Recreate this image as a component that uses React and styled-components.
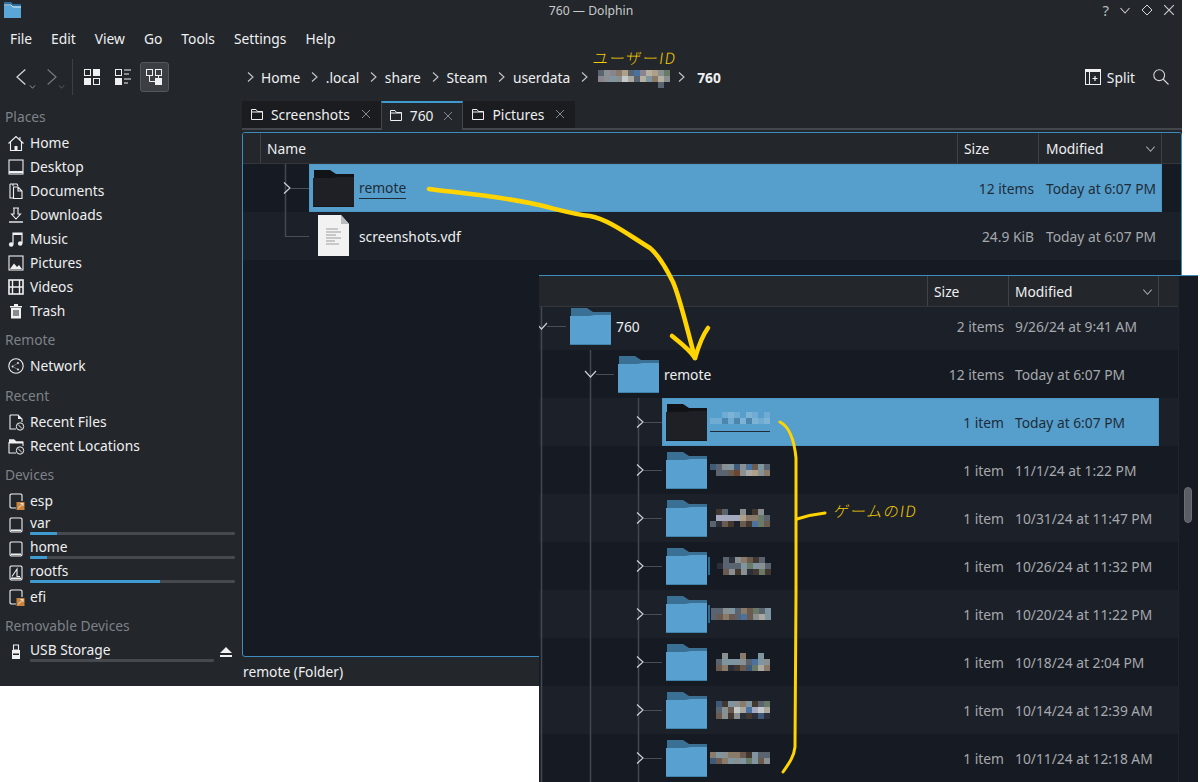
import styled, { createGlobalStyle } from "styled-components";

const GlobalStyle = createGlobalStyle`
  html, body {
    margin: 0;
    padding: 0;
    background: #fff;
  }
  body {
    font-family: "Noto Sans", "Open Sans", sans-serif;
    font-size: 13.8px;
    color: #eff0f1;
  }
`;

/* icons */
const Svg = styled.svg`
  display: block;
  flex: none;
  overflow: visible;
`;

function Chevron({ size = 12, dir = "right", color = "#c4c6c9", width = 1.1 }) {
  const d = {
    right: "M4 1.5 L9 6 L4 10.5",
    left: "M8 1.5 L3 6 L8 10.5",
    down: "M1.5 4 L6 9 L10.5 4",
  }[dir];
  return (
    <Svg width={size} height={size} viewBox="0 0 12 12" fill="none" stroke={color} strokeWidth={width}>
      <path d={d} />
    </Svg>
  );
}

function FolderIcon({ dark }) {
  const back = dark ? "#121317" : "#3a7094";
  const front = dark ? "#1f2025" : "#58a0cf";
  const edge = dark ? "#151619" : "#3f84ae";
  return (
    <Svg width="42" height="38" viewBox="0 -1 42 38">
      <path d="M1 0 H17 L23 4 H41 V12 H1 Z" fill={back} />
      <path d="M0 8 H19 L25 7 H41 V37 H0 Z" fill={front} />
      <rect x="0" y="36" width="41" height="1" fill={edge} />
    </Svg>
  );
}

function FileIcon() {
  return (
    <Svg width="32" height="42" viewBox="0 0 32 42">
      <path d="M0 0 H23 L31 9 V41 H0 Z" fill="#f2f2f2" />
      <path d="M23 0 L31 9 H23 Z" fill="#b9bbbd" />
      <path d="M8 14 H20 M8 17 H23 M8 20 H18 M8 23 H23 M8 26 H17 M8 29 H21" stroke="#9b9da0" strokeWidth="1" />
    </Svg>
  );
}

const stroke = { fill: "none", stroke: "currentColor", strokeWidth: 1.1 };

function Clock() {
  return (
    <g>
      <circle cx="12" cy="12.5" r="3.7" fill="#23262b" stroke="currentColor" />
      <path d="M10 10.5 L14 14.5" stroke="currentColor" />
    </g>
  );
}

function Badge() {
  return (
    <g>
      <rect x="8.5" y="9" width="8" height="8" fill="#c9853f" />
      <path d="M10 15.5 L15 10.5 M12.5 10.5 H15 V13" stroke="#f4e4d0" fill="none" />
    </g>
  );
}

const placeIcons = {
  home: (
    <g {...stroke}>
      <path d="M.5 8.5 L8 1.5 L15.5 8.5 M2.5 7 V15.5 H13.5 V7 M12 2 V4.5" />
      <rect x="6.5" y="11" width="3" height="4.5" fill="currentColor" stroke="none" />
    </g>
  ),
  desktop: (
    <g {...stroke}>
      <rect x="1" y="1" width="14" height="14" />
      <path d="M1 13 H15" strokeWidth="2" />
    </g>
  ),
  documents: (
    <g {...stroke}>
      <path d="M5 3 V1 H9 L10 3 M2 1 H5 M2 1 V15 H5" />
      <path d="M5.5 4 H10 L14 8 V15.5 H5.5 Z M10 4 V8 H14" />
    </g>
  ),
  downloads: (
    <g {...stroke}>
      <path d="M5 1 H11 M6 1 V7 H3.5 L8 12 L12.5 7 H10 V1" />
      <path d="M1 15 H15" strokeWidth="1.4" />
    </g>
  ),
  music: (
    <g>
      <path d="M5 13 V2 H14 V12" fill="none" stroke="currentColor" strokeWidth="1.2" />
      <path d="M5 2 H14 V4 H5 Z" fill="currentColor" />
      <circle cx="3.2" cy="13.5" r="2.3" fill="currentColor" />
      <circle cx="12.2" cy="12.5" r="2.3" fill="currentColor" />
    </g>
  ),
  pictures: (
    <g>
      <rect x="1" y="1" width="14" height="14" {...stroke} />
      <path d="M2 14 L6 8.5 L9 12 L11 10 L14 14 Z" fill="currentColor" />
    </g>
  ),
  videos: (
    <g>
      <rect x="1" y="1" width="14" height="14" fill="none" stroke="currentColor" strokeWidth="1.6" />
      <path d="M4.5 1 V15 M11.5 1 V15 M4.5 8 H11.5 M1 8 H4.5 M11.5 8 H15" stroke="currentColor" strokeWidth="1.4" />
    </g>
  ),
  trash: (
    <g>
      <path d="M2 3 H14 V4.5 H2 Z M6 1 H10 V3 H6 Z M3 5 H13 V15.5 H3 Z" fill="currentColor" />
      <path d="M6 7 V13 M8 7 V13 M10 7 V13" stroke="#23262b" strokeWidth="1" />
    </g>
  ),
  network: (
    <g {...stroke}>
      <circle cx="8" cy="8" r="7.2" />
      <circle cx="4.5" cy="8.5" r=".9" fill="currentColor" stroke="none" />
      <circle cx="10" cy="5" r=".9" fill="currentColor" stroke="none" />
      <circle cx="10" cy="11.5" r=".9" fill="currentColor" stroke="none" />
      <path d="M4.5 8.5 L10 5 M4.5 8.5 L10 11.5" strokeWidth=".4" />
    </g>
  ),
  recentFiles: (
    <g>
      <path d="M2 1 H10 L14 5 V8 M2 1 V15 H8" {...stroke} />
      <path d="M10 1 L14 5 H10 Z" fill="currentColor" />
      <Clock />
    </g>
  ),
  recentLocations: (
    <g>
      <path d="M1 2 H6 L8 4 H15 V8 M1 4 V15 H8" {...stroke} />
      <path d="M1 1.5 H6 L8 3.5 H15 V5.5 H1 Z" fill="currentColor" />
      <Clock />
    </g>
  ),
  drive: (
    <g {...stroke}>
      <path d="M3 1 H13 L14 2 V14 L13 15 H3 L2 14 V2 Z" />
      <path d="M3 13.3 H13" strokeWidth="1.6" />
    </g>
  ),
  driveLink: (
    <g>
      <path d="M3 1 H13 L14 2 V8 M3 1 L2 2 V14 L3 15 H8" {...stroke} />
      <Badge />
    </g>
  ),
  root: (
    <g {...stroke}>
      <path d="M3 1 H13 L14 2 V14 L13 15 H3 L2 14 V2 Z" />
      <path d="M4 11.5 L9 4 V11.5 H12" />
      <path d="M3 13.3 H13" strokeWidth="1.6" />
    </g>
  ),
  usb: (
    <g>
      <path d="M5.5 1 H10.5 V6 H5.5 Z" {...stroke} />
      <path d="M4 6 H12 V15 H4 Z" fill="currentColor" />
      <path d="M5 9.5 H11 V11 H5 Z" fill="#23262b" />
    </g>
  ),
};

function PlaceIcon({ name }) {
  return (
    <Svg width="16" height="16" viewBox="0 0 16 16">
      {placeIcons[name]}
    </Svg>
  );
}

function ViewIcon({ type }) {
  const box = { fill: "none", stroke: "#eff0f1", strokeWidth: 1 };
  const solid = { fill: "#eff0f1" };
  if (type === "icons")
    return (
      <Svg width="16" height="16" viewBox="0 0 16 16">
        <rect x=".5" y=".5" width="6" height="6" {...box} />
        <rect x="9" y="0" width="7" height="7" {...solid} />
        <rect x="0" y="9" width="7" height="7" {...solid} />
        <rect x="9.5" y="9.5" width="6" height="6" {...box} />
      </Svg>
    );
  if (type === "compact")
    return (
      <Svg width="16" height="16" viewBox="0 0 16 16">
        <rect x=".5" y=".5" width="6" height="6" {...box} />
        <rect x="0" y="9" width="7" height="7" {...solid} />
        <path d="M9 1 H16 M9 5 H14 M9 10 H16 M9 14 H13" stroke="#eff0f1" />
      </Svg>
    );
  return (
    <Svg width="16" height="16" viewBox="0 0 16 16">
      <rect x=".5" y=".5" width="6" height="6" {...box} />
      <rect x="9.5" y=".5" width="6" height="6" {...box} />
      <path d="M3.5 7 V12.5 H9 M12.5 7 V9" stroke="#eff0f1" fill="none" />
      <rect x="9" y="9" width="7" height="7" {...solid} />
    </Svg>
  );
}

function TabFolder() {
  return (
    <Svg width="12" height="11" viewBox="0 0 12 11" fill="none" stroke="#eff0f1">
      <path d="M.5 .5 H5 L6.5 2.5 H11.5 V10.5 H.5 Z" />
      <path d="M.5 3 H11.5" />
    </Svg>
  );
}

function CloseX({ size = 10, color = "#85888c" }) {
  return (
    <Svg width={size} height={size} viewBox="0 0 10 10" stroke={color} fill="none">
      <path d="M1 1 L9 9 M9 1 L1 9" />
    </Svg>
  );
}

/* pixelated bits of censored text */
const palette = {
  a: "#5a6470", b: "#8a8f92", c: "#6b5a50", d: "#3f5a78", e: "#aaa8a0",
  f: "#43382f", g: "#7f95a0", h: "#ae9f88", i: "#4a72a0", j: "#6a7a68",
  k: "#2a2f3a", l: "#c5c8c8", m: "#8a7a6a", n: "#a5a9c0", o: "#6b4630",
  p: "#6fabd2", q: "#4c86ae", r: "#7db4d6", s: "#8a8490", t: "#b5b0a0",
};

function Mosaic({ rows }) {
  return (
    <Svg width={rows[0].length * 6} height={rows.length * 6} shapeRendering="crispEdges">
      {rows.map((row, y) =>
        row.split("").map((c, x) =>
          palette[c] ? <rect key={x} x={x * 6} y={y * 6} width="6" height="6" fill={palette[c]} /> : null,
        ),
      )}
    </Svg>
  );
}

const mosaics = {
  crumb: ["absmhaisthbj", "sbgbleatgmtb", "..........a."],
  sel: ["..prp.rp.p", "ppqpqrqrpr", ".........."],
  m1: ["dabgdbicga", ".aacobehbm"],
  m2: [".fa..b.fb.", ".nnnnhmmja", "akcf.cfijc"],
  m3: ["..akbmcfa.", ".kaaagjgba", "..cbfbkfjf"],
  m5: ["aabgamcjag", "acmcaicbeg"],
  m4: ["..b..m..g.", ".agggbaigb", ".cmkfcdjem"],
  m6: [".dfgbmgfaj", ".abcleinle", ".cbfbkfkdk"],
  m7: ["mgbmmcfgaa", "dcmgbgjgcb"],
};

/* window */
const Page = styled.div`
  position: relative;
  width: 1200px;
  height: 782px;
  overflow: hidden;
  background: #fff;
`;

const Window = styled.div`
  width: 1182px;
  height: 686px;
  background: #23262b;
  display: flex;
  flex-direction: column;
`;

const TitleBar = styled.div`
  height: 22px;
  box-sizing: border-box;
  flex: none;
  display: flex;
  align-items: center;
  justify-content: space-between;
  padding: 0 7px 2px 4px;
  position: relative;
`;

const TitleText = styled.div`
  position: absolute;
  left: 0;
  right: 0;
  text-align: center;
  font-size: 12.2px;
  color: #c8cacc;
`;

const WindowButtons = styled.div`
  display: flex;
  align-items: center;
  gap: 10px;
  font-size: 15px;
  color: #b9bbbe;
`;

const MenuBar = styled.div`
  height: 32px;
  flex: none;
  display: flex;
  align-items: center;
  gap: 19px;
  padding: 0 0 0 10px;
`;

const Toolbar = styled.div`
  height: 46px;
  box-sizing: border-box;
  flex: none;
  display: flex;
  align-items: center;
  padding: 0 13px 0 0;
`;

const NavZone = styled.div`
  width: 244px;
  flex: none;
  display: flex;
  align-items: center;
  padding-left: 12px;
  box-sizing: border-box;
`;

const NavButton = styled.div`
  position: relative;
  width: 23px;
  height: 24px;
  margin-right: 6px;
  display: flex;
  align-items: center;
  opacity: ${(p) => (p.$dim ? 0.5 : 1)};
`;

const NavDrop = styled.span`
  position: absolute;
  left: 17px;
  bottom: -1px;
`;

const Separator = styled.div`
  width: 1px;
  height: 36px;
  background: #3c3f44;
  margin-left: 2px;
  margin-right: 4.5px;
`;

const ViewButton = styled.div`
  width: 29px;
  height: 30px;
  margin-right: 2px;
  display: flex;
  align-items: center;
  justify-content: center;
  box-sizing: border-box;
  border-radius: 3px;
  background: ${(p) => (p.$active ? "#3b3e43" : "transparent")};
  border: 1px solid ${(p) => (p.$active ? "#54575b" : "transparent")};
`;

const Crumbs = styled.div`
  display: flex;
  align-items: center;
  flex: 1;
`;

const CrumbArrow = styled.span`
  width: 12px;
  margin: 0 ${(p) => p.$right ?? 5.5}px 0 ${(p) => p.$left ?? 8}px;
  display: flex;
`;

const Crumb = styled.span`
  font-weight: ${(p) => (p.$current ? 700 : 400)};
`;

const CrumbMosaic = styled.span`
  margin-top: 4px;
`;

const SplitButton = styled.div`
  display: flex;
  align-items: center;
  gap: 6px;
  margin-right: 18px;
`;

const Body = styled.div`
  flex: 1;
  display: flex;
  min-height: 0;
`;

const Sidebar = styled.aside`
  width: 242px;
  flex: none;
  box-sizing: border-box;
`;

const Group = styled.section`
  margin-top: ${(p) => p.$gap ?? 5}px;
`;

const GroupTitle = styled.div`
  height: 24px;
  line-height: 24px;
  margin-bottom: 2px;
  padding-left: 5px;
  color: #7e8287;
`;

const Place = styled.div`
  height: 24px;
  display: flex;
  align-items: center;
  padding-left: 8px;
  padding-right: 7px;
  gap: 6px;
`;

const PlaceLabel = styled.div`
  flex: 1;
  line-height: 20px;
  min-width: 0;
`;

const Capacity = styled.div`
  height: 3px;
  background: #46494e;
  border-radius: 1px;
  margin: -1px 0 2px;
  overflow: hidden;
`;

const CapacityFill = styled.div`
  height: 100%;
  background: #3f9ad0;
`;

const EjectSlot = styled.span`
  margin-right: 3px;
`;

const Main = styled.main`
  flex: 1;
  min-width: 0;
  display: flex;
  flex-direction: column;
  padding-top: 1px;
`;

const TabBar = styled.div`
  height: 27px;
  flex: none;
  display: flex;
  border-bottom: 2px solid #43464a;
  margin-bottom: 2px;
`;

const Tab = styled.div`
  height: ${(p) => (p.$active ? 29 : 27)}px;
  box-sizing: border-box;
  display: flex;
  align-items: center;
  padding: 0 ${(p) => (p.$active ? 9 : 10)}px ${(p) => (p.$active ? 2 : 1)}px ${(p) => (p.$active ? 8 : 9)}px;
  background: ${(p) => (p.$active ? "#23262b" : "#1a1c20")};
  border-top: ${(p) => (p.$active ? "2px solid #3f9ad0" : "none")};
  border-left: ${(p) => (p.$active ? "1px solid #43464a" : "none")};
  border-right: ${(p) => (p.$active ? "1px solid #43464a" : "none")};
`;

const TabLabel = styled.span`
  margin: 0 ${(p) => (p.$active ? 10 : 11)}px 0 8px;
`;

const Panel = styled.div`
  flex: 1;
  min-height: 0;
  box-sizing: border-box;
  border: 1px solid #3f8dbd;
  border-radius: 3px;
  background: #161b23;
  overflow: hidden;
`;

const StatusBar = styled.div`
  height: 29px;
  flex: none;
  line-height: 30px;
  padding-left: 1px;
`;

const Header = styled.div`
  height: 31px;
  box-sizing: border-box;
  display: flex;
  position: relative;
  z-index: 1;
  background: #23262b;
  border-bottom: 1px solid #33363a;
`;

const HeaderCell = styled.div`
  box-sizing: border-box;
  flex: ${(p) => (p.$w ? `0 0 ${p.$w}px` : "1")};
  display: flex;
  align-items: center;
  justify-content: space-between;
  padding: 0 5px 0 ${(p) => p.$pad ?? 6}px;
  border-right: 1px solid #3f4246;
`;

const Row = styled.div`
  height: 48px;
  display: flex;
  background: ${(p) => (p.$alt ? "#1b2029" : "#161b23")};
`;

const Item = styled.div`
  flex: 1;
  min-width: 0;
  display: flex;
  align-items: center;
  box-sizing: border-box;
  padding-left: 4px;
  background: ${(p) => (p.$selected ? "#569fcd" : "transparent")};
  box-shadow: ${(p) => (p.$selected ? "inset 0 0 0 1px #4e97c5" : "none")};
  color: ${(p) => (p.$selected ? "#1f2c38" : "#eff0f1")};
`;

const FileSlot = styled.span`
  padding-left: 5px;
`;

const Name = styled.div`
  flex: 1;
  min-width: 0;
  margin-left: ${(p) => p.$gap ?? 4}px;
  display: flex;
  align-items: center;
`;

const Underlined = styled.span`
  border-bottom: 1px solid #1f2c38;
  padding-bottom: 1px;
  display: inline-flex;
`;

const Tick = styled.span`
  width: 2px;
  height: 18px;
  margin-right: 1px;
  background: #2f6a93;
`;

const SizeCell = styled.div`
  color: ${(p) => (p.$selected ? "#1f2c38" : "#a7a9ac")};
  margin-right: ${(p) => p.$mr ?? 12}px;
  text-align: right;
`;

const DateCell = styled.div`
  width: ${(p) => p.$w}px;
  flex: none;
  color: ${(p) => (p.$selected ? "#1f2c38" : "#a7a9ac")};
  white-space: nowrap;
`;

const Gutter = styled.div`
  width: 19px;
  flex: none;
`;

/* the second screenshot pasted over the first */
const Overlay = styled.div`
  position: absolute;
  left: 539px;
  top: 275px;
  width: 659px;
  height: 507px;
  background: #161b23;
  border-top: 1px solid #3f8dbd;
  display: flex;
  overflow: hidden;
`;

const OverlayList = styled.div`
  flex: 1;
  min-width: 0;
`;

/* the list is scrolled a little, its first row runs under the header */
const ScrolledRows = styled.div`
  margin-top: -5px;
`;

const ScrollTrack = styled.div`
  width: 20px;
  flex: none;
  box-sizing: border-box;
  border-left: 1px solid #20252c;
  padding: 211px 6px 0 5px;
`;

const ScrollHandle = styled.div`
  height: 36px;
  background: #5a5e64;
  border: 1px solid #6b6e73;
  border-radius: 4px;
  box-sizing: border-box;
`;

const Ink = styled.svg`
  position: absolute;
  left: 0;
  top: 0;
  z-index: 2;
  pointer-events: none;
`;

const Note = styled.span`
  position: absolute;
  z-index: 2;
  left: ${(p) => p.$x}px;
  top: ${(p) => p.$y}px;
  font-family: "Noto Sans CJK JP", sans-serif;
  font-size: 15.5px;
  font-weight: 300;
  line-height: 18px;
  letter-spacing: 1.2px;
  color: #f5cc00;
  transform: skewX(-8deg);
  white-space: nowrap;
`;

function Guides({ width, verts = [], branch, open, stopHalf }) {
  const hasChevron = open !== undefined;
  return (
    <Svg width={width} height="48" viewBox={`0 0 ${width} 48`}>
      {verts.map((x) => (
        <path key={x} d={`M${x + 0.5} 0 V${stopHalf && x === branch ? 24.5 : 48}`} stroke="#424750" strokeWidth="1.5" />
      ))}
      <path d={`M${hasChevron ? branch + 6 : branch} 24.5 H${width}`} stroke="#4a4e54" />
      {hasChevron && (
        <path
          d={open ? `M${branch - 5} 21 L${branch + 0.5} 27 L${branch + 6} 21` : `M${branch - 1} 18.5 L${branch + 5} 24 L${branch - 1} 29.5`}
          fill="none"
          stroke="#cdcfd2"
          strokeWidth="1.2"
        />
      )}
    </Svg>
  );
}

const mainPlaces = [
  ["home", "Home"], ["desktop", "Desktop"], ["documents", "Documents"], ["downloads", "Downloads"],
  ["music", "Music"], ["pictures", "Pictures"], ["videos", "Videos"], ["trash", "Trash"],
];

const devices = [
  { icon: "driveLink", name: "esp" },
  { icon: "drive", name: "var", used: 13 },
  { icon: "drive", name: "home", used: 8.5 },
  { icon: "root", name: "rootfs", used: 63.5 },
  { icon: "driveLink", name: "efi" },
];

const gameRows = [
  { id: "m1", date: "11/1/24 at 1:22 PM" },
  { id: "m2", date: "10/31/24 at 11:47 PM" },
  { id: "m3", date: "10/26/24 at 11:32 PM", tick: true },
  { id: "m5", date: "10/20/24 at 11:22 PM", tick: true },
  { id: "m4", date: "10/18/24 at 2:04 PM" },
  { id: "m6", date: "10/14/24 at 12:39 AM" },
  { id: "m7", date: "10/11/24 at 12:18 AM" },
];

function Places({ title, items, gap }) {
  return (
    <Group $gap={gap}>
      <GroupTitle>{title}</GroupTitle>
      {items.map(([icon, name]) => (
        <Place key={name}>
          <PlaceIcon name={icon} />
          <PlaceLabel>{name}</PlaceLabel>
        </Place>
      ))}
    </Group>
  );
}

function TabItem({ label, active }) {
  return (
    <Tab $active={active}>
      <TabFolder />
      <TabLabel $active={active}>{label}</TabLabel>
      <CloseX />
    </Tab>
  );
}

export default function App() {
  return (
    <Page>
      <GlobalStyle />
      <Window>
        <TitleBar>
          <Svg width="18" height="16" viewBox="0 0 18 16">
            <path d="M0 0 H7 L9 2 H17 V15 H0 Z" fill="#2d6f9c" />
            <path d="M0 4 H17 V16 H0 Z" fill="#5aa6d6" />
            <path d="M0 3 H7 L9 5 H17" stroke="#d8ecf8" fill="none" />
          </Svg>
          <TitleText>760 — Dolphin</TitleText>
          <WindowButtons>
            <span>?</span>
            <Chevron size={12} dir="down" color="#c8cacc" />
            <Svg width="12" height="12" viewBox="0 0 12 12" fill="none" stroke="#d4d6d8">
              <path d="M6 1 L11 6 L6 11 L1 6 Z" />
            </Svg>
            <CloseX size={12} color="#c8cacc" />
          </WindowButtons>
        </TitleBar>
        <MenuBar>
          {["File", "Edit", "View", "Go", "Tools", "Settings", "Help"].map((m) => (
            <span key={m}>{m}</span>
          ))}
        </MenuBar>
        <Toolbar>
          <NavZone>
            <NavButton>
              <Chevron size={20} dir="left" color="#d4d6d8" width={0.75} />
              <NavDrop>
                <Chevron size={7} dir="down" />
              </NavDrop>
            </NavButton>
            <NavButton $dim>
              <Chevron size={20} dir="right" width={0.75} />
              <NavDrop>
                <Chevron size={7} dir="down" />
              </NavDrop>
            </NavButton>
            <Separator />
            <ViewButton>
              <ViewIcon type="icons" />
            </ViewButton>
            <ViewButton>
              <ViewIcon type="compact" />
            </ViewButton>
            <ViewButton $active>
              <ViewIcon type="details" />
            </ViewButton>
          </NavZone>
          <Crumbs>
            <CrumbArrow $left={0} $right={5}>
              <Chevron />
            </CrumbArrow>
            <Crumb>Home</Crumb>
            <CrumbArrow>
              <Chevron />
            </CrumbArrow>
            <Crumb>.local</Crumb>
            <CrumbArrow>
              <Chevron />
            </CrumbArrow>
            <Crumb>share</Crumb>
            <CrumbArrow>
              <Chevron />
            </CrumbArrow>
            <Crumb>Steam</Crumb>
            <CrumbArrow>
              <Chevron />
            </CrumbArrow>
            <Crumb>userdata</Crumb>
            <CrumbArrow $right={8}>
              <Chevron />
            </CrumbArrow>
            <CrumbMosaic>
              <Mosaic rows={mosaics.crumb} />
            </CrumbMosaic>
            <CrumbArrow $left={5} $right={10}>
              <Chevron />
            </CrumbArrow>
            <Crumb $current>760</Crumb>
          </Crumbs>
          <SplitButton>
            <Svg width="16" height="16" viewBox="0 0 16 16">
              <rect x=".5" y=".5" width="15" height="15" fill="none" stroke="#eff0f1" />
              <rect x="0" y="0" width="16" height="3" fill="#eff0f1" />
              <path d="M4.5 3 V16" stroke="#eff0f1" />
              <path d="M10 7 V12 M7.5 9.5 H12.5" stroke="#eff0f1" strokeWidth="1.2" />
            </Svg>
            Split
          </SplitButton>
          <Svg width="16" height="16" viewBox="0 0 16 16" fill="none" stroke="#d4d6d8" strokeWidth="1.1">
            <circle cx="6.2" cy="6.2" r="5.4" />
            <path d="M10 10 L15.5 15.5" />
          </Svg>
        </Toolbar>
        <Body>
          <Sidebar>
            <Places title="Places" items={mainPlaces} />
            <Places title="Remote" items={[["network", "Network"]]} />
            <Places
              title="Recent"
              gap={6}
              items={[
                ["recentFiles", "Recent Files"],
                ["recentLocations", "Recent Locations"],
              ]}
            />
            <Group>
              <GroupTitle>Devices</GroupTitle>
              {devices.map((d) => (
                <Place key={d.name}>
                  <PlaceIcon name={d.icon} />
                  <PlaceLabel>
                    {d.name}
                    {d.used && (
                      <Capacity>
                        <CapacityFill style={{ width: `${d.used}%` }} />
                      </Capacity>
                    )}
                  </PlaceLabel>
                </Place>
              ))}
            </Group>
            <Group>
              <GroupTitle>Removable Devices</GroupTitle>
              <Place>
                <PlaceIcon name="usb" />
                <PlaceLabel>
                  USB Storage
                  <Capacity />
                </PlaceLabel>
                <EjectSlot>
                  <Svg width="12" height="12" viewBox="0 0 12 12" fill="#eff0f1">
                    <path d="M6 1 L12 7 H0 Z M0 9 H12 V11 H0 Z" />
                  </Svg>
                </EjectSlot>
              </Place>
            </Group>
          </Sidebar>
          <Main>
            <TabBar>
              <TabItem label="Screenshots" />
              <TabItem label="760" active />
              <TabItem label="Pictures" />
            </TabBar>
            <Panel>
              <Header>
                <HeaderCell $w={18} />
                <HeaderCell>Name</HeaderCell>
                <HeaderCell $w={81}>Size</HeaderCell>
                <HeaderCell $w={123} $pad={7}>
                  Modified
                  <Chevron size={11} dir="down" color="#a7a9ac" />
                </HeaderCell>
                <Gutter />
              </Header>
              <Row>
                <Guides width={66} verts={[42]} branch={42} open={false} />
                <Item $selected>
                  <FolderIcon dark />
                  <Name>
                    <Underlined>remote</Underlined>
                  </Name>
                  <SizeCell $selected>12 items</SizeCell>
                  <DateCell $w={116} $selected>
                    Today at 6:07 PM
                  </DateCell>
                </Item>
                <Gutter />
              </Row>
              <Row $alt>
                <Guides width={66} verts={[42]} branch={42} stopHalf />
                <Item>
                  <FileSlot>
                    <FileIcon />
                  </FileSlot>
                  <Name $gap={9}>screenshots.vdf</Name>
                  <SizeCell>24.9 KiB</SizeCell>
                  <DateCell $w={116}>Today at 6:07 PM</DateCell>
                </Item>
                <Gutter />
              </Row>
            </Panel>
            <StatusBar>remote (Folder)</StatusBar>
          </Main>
        </Body>
      </Window>

      <Overlay>
        <OverlayList>
          <Header>
            <HeaderCell>&nbsp;</HeaderCell>
            <HeaderCell $w={81}>Size</HeaderCell>
            <HeaderCell $w={150}>
              Modified
              <Chevron size={11} dir="down" color="#a7a9ac" />
            </HeaderCell>
            <Gutter />
          </Header>
          <ScrolledRows>
            <Row $alt>
              <Guides width={27} verts={[2]} branch={2} open />
              <Item>
                <FolderIcon />
                <Name>760</Name>
                <SizeCell $mr={11}>2 items</SizeCell>
                <DateCell $w={144}>9/26/24 at 9:41 AM</DateCell>
              </Item>
              <Gutter />
            </Row>
            <Row>
              <Guides width={75} verts={[2, 51]} branch={51} open />
              <Item>
                <FolderIcon />
                <Name>remote</Name>
                <SizeCell $mr={11}>12 items</SizeCell>
                <DateCell $w={144}>Today at 6:07 PM</DateCell>
              </Item>
              <Gutter />
            </Row>
            <Row $alt>
              <Guides width={123} verts={[2, 51, 99]} branch={99} open={false} />
              <Item $selected>
                <FolderIcon dark />
                <Name $gap={2}>
                  <Underlined>
                    <Mosaic rows={mosaics.sel} />
                  </Underlined>
                </Name>
                <SizeCell $selected $mr={11}>1 item</SizeCell>
                <DateCell $w={144} $selected>
                  Today at 6:07 PM
                </DateCell>
              </Item>
              <Gutter />
            </Row>
            {gameRows.map((g, i) => (
              <Row key={g.id} $alt={i % 2 === 1}>
                <Guides width={123} verts={[2, 51, 99]} branch={99} open={false} />
                <Item>
                  <FolderIcon />
                  <Name $gap={g.tick ? 0 : 2}>
                    {g.tick && <Tick />}
                    <Mosaic rows={mosaics[g.id]} />
                  </Name>
                  <SizeCell $mr={11}>1 item</SizeCell>
                  <DateCell $w={144}>{g.date}</DateCell>
                </Item>
                <Gutter />
              </Row>
            ))}
          </ScrolledRows>
        </OverlayList>
        <ScrollTrack>
          <ScrollHandle />
        </ScrollTrack>
      </Overlay>

      <Ink width="1200" height="782" viewBox="0 0 1200 782" fill="none" stroke="#ffd400" strokeLinecap="round" strokeLinejoin="round">
        <path
          strokeWidth="4.5"
          d="M429 189 C 450 192 490 195 530 203 C 550 207 570 214 590 216 C 610 220 630 236 650 248 C 660 256 668 272 673 282 C 680 298 686 325 695 358"
        />
        <path strokeWidth="4.5" d="M672 336 C 682 344 690 350 695 358 C 698 348 702 336 708 328" />
        <path
          strokeWidth="3"
          d="M780 422 C 788 426 794 438 796 458 L 796 593 L 795 747 C 794 756 790 762 783 772"
        />
        <path strokeWidth="3" d="M797 519 C 806 516 816 514 825 513" />
      </Ink>
      <Note $x={593} $y={48}>ユーザーID</Note>
      <Note $x={834} $y={501}>ゲームのID</Note>
    </Page>
  );
}
